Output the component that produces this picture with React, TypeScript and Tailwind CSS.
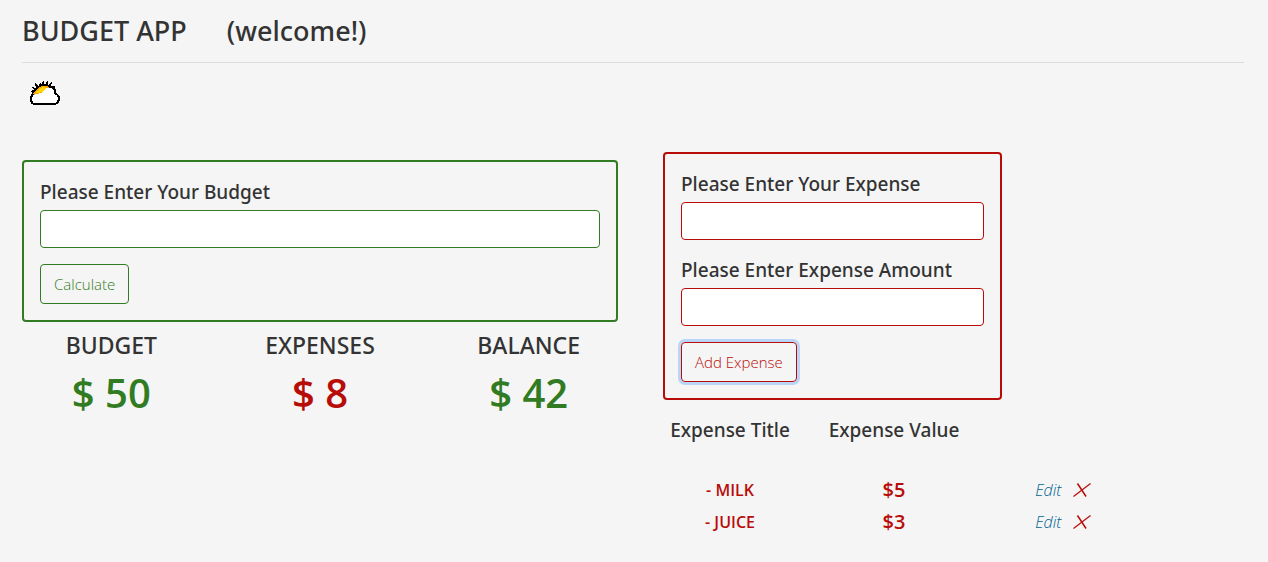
import { useId } from "react";

type Expense = { title: string; value: number };

const expenses: Expense[] = [
  { title: "MILK", value: 5 },
  { title: "JUICE", value: 3 },
];

function WeatherIcon() {
  return (
    <svg
      className="ml-2 block h-6 w-[30px]"
      viewBox="0 0 30 24"
      shapeRendering="crispEdges"
      role="img"
      aria-label="Partly cloudy"
    >
      <path
        d="M1 15 L3 12 L0 10 L4 9 L1 6 L6 7 L5 2 L9 5 L10 1 L12 4 L13 -1 L15 4 L18 -1 L18 4 L22 1 L21 5 L25 5 L25 8 L10 15Z"
        fill="#000"
      />
      <path d="M3 14 L4 11 L7 8 L12 5 L18 5 L20 8 L8 15Z" fill="#ffa500" />
      <path d="M6 12 L9 8 L13 6 L17 7 L14 11Z" fill="#ffd700" />
      <path
        d="M5 23 C2 23 1 21 1 18 C1 15 3 14 6 13 L11 12 C13 11 14 10 15 8 C18 6 23 6 25 9 L25 13 C28 14 29 15 29 17 C29 20 27 23 24 23Z"
        fill="#fff"
      />
      <path
        d="M3 13 C1 15 1 16 1 18 C1 21 2 23 5 23 L24 23 C27 23 29 20 29 17 C29 15 28 14 25 12 L25 9 C24 7 22 6 19 6"
        fill="none"
        stroke="#000"
        strokeWidth="2"
      />
    </svg>
  );
}

function Field({ label, className }: { label: string; className: string }) {
  const id = useId();
  return (
    <div className="mb-4">
      <label
        htmlFor={id}
        className="mb-1 block font-['Noto_Sans',sans-serif] text-[19px] leading-7 font-medium"
      >
        {label}
      </label>
      <input
        id={id}
        type="text"
        className={`block h-[38px] w-full rounded border bg-white px-3 outline-none ${className}`}
      />
    </div>
  );
}

function Stat({ label, value, className }: { label: string; value: number; className: string }) {
  return (
    <div>
      <h2 className="font-['Noto_Sans',sans-serif] text-[23px] leading-8 font-medium">{label}</h2>
      <p className={`mt-2 text-[40px] leading-12 font-semibold ${className}`}>$ {value}</p>
    </div>
  );
}

export default function App() {
  return (
    <div className="min-h-screen bg-[#f5f5f5] pr-6 pl-[22px] font-['Open_Sans',sans-serif] text-[#333]">
      <header className="flex gap-10 border-b border-[#dcdcdc] pt-3 pb-3 font-['Noto_Sans',sans-serif] text-[27px] leading-[38px] font-medium">
        <h1>BUDGET APP</h1>
        <span>(welcome!)</span>
      </header>

      <div className="pt-[18px]">
        <WeatherIcon />
      </div>

      <main className="mt-[47px] grid grid-cols-[596fr_581fr] gap-[45px]">
        <section className="pt-2">
          <form className="rounded border-2 border-[#317b22] p-4">
            <Field label="Please Enter Your Budget" className="border-[#317b22]" />
            <button
              type="button"
              className="block h-10 rounded border border-[#317b22] px-[13px] text-[15px] font-light text-[#317b22]"
            >
              Calculate
            </button>
          </form>
          <div className="-mx-[15px] grid grid-cols-3 pt-[7px] text-center">
            <Stat label="BUDGET" value={50} className="text-[#317b22]" />
            <Stat label="EXPENSES" value={8} className="text-[#b80c09]" />
            <Stat label="BALANCE" value={42} className="text-[#317b22]" />
          </div>
        </section>

        <section>
          <form className="w-7/12 rounded border-2 border-[#b80c09] p-4">
            <Field label="Please Enter Your Expense" className="border-[#b80c09]" />
            <Field label="Please Enter Expense Amount" className="border-[#b80c09]" />
            <button
              type="button"
              className="block h-10 rounded border border-[#b80c09] px-[13px] text-[15px] font-light text-[#b80c09] ring-3 ring-[#b9d6f8]"
            >
              Add Expense
            </button>
          </form>

          <div className="-ml-[15px] pt-[18px]">
            <table className="w-[85%] table-fixed text-center">
              <thead>
                <tr className="align-top font-['Noto_Sans',sans-serif] text-[19px] leading-6">
                  <th className="h-14 w-[164px] font-medium whitespace-nowrap">Expense Title</th>
                  <th className="w-[164px] font-medium whitespace-nowrap">Expense Value</th>
                  <th aria-label="Actions" />
                </tr>
              </thead>
              <tbody>
                {expenses.map((e) => (
                  <tr key={e.title} className="h-8 text-[#b80c09]">
                    <td className="text-base font-semibold">- {e.title}</td>
                    <td className="text-xl font-semibold">${e.value}</td>
                    <td className="pr-1">
                      <div className="flex items-center justify-center gap-3">
                        <a href="#edit" className="font-light text-[#006494] italic">
                          Edit
                        </a>
                        <button type="button" aria-label={`Delete ${e.title}`}>
                          <svg className="block h-[14px] w-[18px]" viewBox="0 0 18 14" fill="none" stroke="currentColor">
                            <path d="M0.5 13.5L17.5 0.5" strokeWidth="1.2" />
                            <path d="M4.5 0.5L13 13.5" strokeWidth="1.5" />
                          </svg>
                        </button>
                      </div>
                    </td>
                  </tr>
                ))}
              </tbody>
            </table>
          </div>
        </section>
      </main>
    </div>
  );
}
